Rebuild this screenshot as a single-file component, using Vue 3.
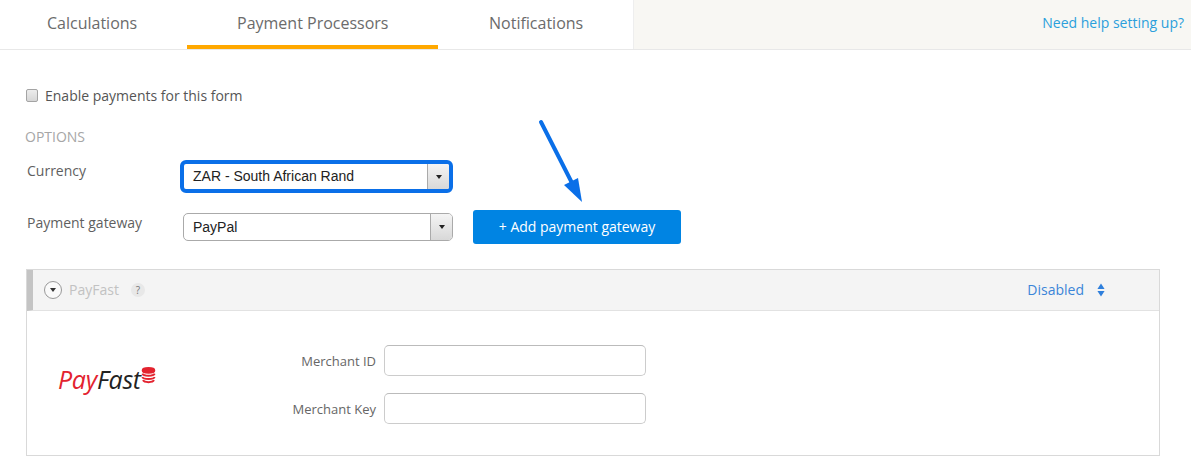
<template>
  <div class="page">
    <div class="tabs">
      <a class="tab tab-first">Calculations</a>
      <a class="tab active">Payment Processors</a>
      <a class="tab tab-last">Notifications</a>
      <div class="tabs-rest">
        <a class="help">Need help setting up?</a>
      </div>
    </div>

    <div class="content">
      <label class="enable">
        <span class="checkbox"></span>
        Enable payments for this form
      </label>

      <div class="section-title">OPTIONS</div>

      <div class="row row-currency">
        <div class="row-label">Currency</div>
        <div class="select select-focus">
          <span class="select-value">ZAR - South African Rand</span>
          <span class="select-arrow"><i></i></span>
        </div>
      </div>

      <div class="row row-gateway">
        <div class="row-label">Payment gateway</div>
        <div class="select">
          <span class="select-value">PayPal</span>
          <span class="select-arrow"><i></i></span>
        </div>
        <button class="add-btn">+ Add payment gateway</button>
      </div>

      <div class="card">
        <div class="card-header">
          <span class="toggle"><i></i></span>
          <span class="card-title">PayFast</span>
          <span class="hint">?</span>
          <span class="status">Disabled</span>
          <svg class="updown" width="8" height="14" viewBox="0 0 8 14">
            <path d="M4 0.5 L7.6 6 H0.4 Z M0.4 8 H7.6 L4 13.5 Z" fill="#2f7fdc" />
          </svg>
        </div>
        <div class="card-body">
          <div class="logo">
            <span class="logo-pay">Pay</span><span class="logo-fast">Fast</span>
            <svg class="logo-coins" width="15" height="17" viewBox="0 0 15 17">
              <g fill="none" stroke="#e3232f" stroke-width="2">
                <ellipse cx="7.5" cy="3.4" rx="5.8" ry="2.3" fill="#e3232f" />
                <path d="M1.4 6.6 C2.5 9.4 12.5 9.4 13.6 6.6" />
                <path d="M1.4 10 C2.5 12.8 12.5 12.8 13.6 10" />
                <path d="M2 13.2 C3.2 15.8 11.8 15.8 13 13.2" />
              </g>
            </svg>
          </div>
          <div class="fields">
            <div class="field">
              <label>Merchant ID</label>
              <input type="text" />
            </div>
            <div class="field">
              <label>Merchant Key</label>
              <input type="text" />
            </div>
          </div>
        </div>
      </div>
    </div>

    <!-- annotation arrow drawn over the screenshot -->
    <svg class="arrow" width="60" height="90" viewBox="0 0 60 90">
      <path d="M3 3 L34 64" stroke="#0a6fe8" stroke-width="4" stroke-linecap="round" fill="none" />
      <path d="M26 66 L40 59 L44 83 Z" fill="#0a6fe8" />
    </svg>
  </div>
</template>

<script setup>
</script>

<style>
html, body {
  margin: 0;
  background: #fff;
}
</style>

<style scoped>
.page {
  position: relative;
  width: 1191px;
  height: 460px;
  overflow: hidden;
  font-family: "Open Sans", sans-serif;
  color: #666;
}
.tabs {
  display: flex;
  height: 49px;
  border-bottom: 1px solid #e8e8e8;
}
.tab {
  box-sizing: border-box;
  height: 49px;
  padding: 14px 0 0 50px;
  font-size: 16px;
  line-height: 18px;
  color: #6b6b6b;
  white-space: nowrap;
}
.tab-first {
  width: 187px;
  padding-left: 47px;
}
.tab.active {
  width: 251px;
  border-bottom: 4px solid #ffa800;
}
.tab-last {
  width: 195px;
  padding-left: 51px;
}
.tabs-rest {
  flex: 1;
  background: #f8f7f3;
  border-left: 1px solid #eee;
  text-align: right;
  padding: 11px 7px 0 0;
}
.help {
  font-size: 14px;
  line-height: 18px;
  color: #2b9fdc;
}
.content {
  padding: 37px 31px 0 26px;
}
.enable {
  display: flex;
  align-items: center;
  height: 16px;
  font-size: 14px;
  color: #555;
}
.checkbox {
  box-sizing: border-box;
  width: 12px;
  height: 13px;
  margin-right: 7px;
  border: 1px solid #a4a4a4;
  border-radius: 2px;
  background: linear-gradient(#ececec, #d6d6d6);
}
.section-title {
  margin: 25px 0 0 -1px;
  font-size: 14px;
  line-height: 18px;
  color: #a6a6a6;
}
.row {
  display: flex;
  align-items: flex-start;
}
.row-currency {
  margin-top: 14px;
}
.row-gateway {
  margin-top: 20px;
}
.row-label {
  width: 157px;
  padding-left: 1px;
  box-sizing: border-box;
  margin-top: 1px;
  font-size: 14px;
  line-height: 18px;
  color: #5f5f5f;
}
.row-currency .row-label {
  margin-top: 2px;
}
.select {
  box-sizing: border-box;
  display: flex;
  width: 270px;
  height: 28px;
  border: 1px solid #aaa;
  border-radius: 5px;
  background: #fff;
  overflow: hidden;
  font-family: "Liberation Sans", Arial, sans-serif;
  font-size: 14px;
  color: #222;
}
.select-focus {
  width: 273px;
  height: 33px;
  margin-left: -3px;
  border: 4px solid #0a6fe8;
  border-radius: 6px;
}
.select-value {
  flex: 1;
  padding-left: 9px;
  line-height: 27px;
}
.select-focus .select-value {
  line-height: 25px;
}
.select-arrow {
  display: flex;
  align-items: center;
  justify-content: center;
  width: 21px;
  border-left: 1px solid #aaa;
  background: linear-gradient(#f4f4f4, #d8d8d8);
}
.select-arrow i {
  width: 0;
  height: 0;
  border-left: 3px solid transparent;
  border-right: 3px solid transparent;
  border-top: 4px solid #222;
}
.add-btn {
  width: 208px;
  height: 34px;
  margin: -3px 0 0 20px;
  padding: 0 0 2px;
  border: none;
  border-radius: 3px;
  background: #0084e3;
  color: #fff;
  font-family: "Open Sans", sans-serif;
  font-size: 14px;
  font-weight: 400;
}
.card {
  box-sizing: border-box;
  width: 1134px;
  height: 187px;
  margin-top: 25px;
  border: 1px solid #d9d9d9;
}
.card-header {
  box-sizing: border-box;
  display: flex;
  align-items: center;
  height: 41px;
  padding-right: 54px;
  background: #f4f4f4;
  border-left: 6px solid #c4c4c4;
  border-bottom: 1px solid #e2e2e2;
}
.toggle {
  box-sizing: border-box;
  display: flex;
  align-items: center;
  justify-content: center;
  width: 18px;
  height: 18px;
  margin-left: 11px;
  border: 1px solid #999;
  border-radius: 50%;
  background: #fafafa;
}
.toggle i {
  width: 0;
  height: 0;
  border-left: 3px solid transparent;
  border-right: 3px solid transparent;
  border-top: 4px solid #333;
}
.card-title {
  margin: 0 0 2px 7px;
  font-size: 14px;
  color: #c2c2c2;
}
.hint {
  width: 14px;
  height: 14px;
  margin-left: 12px;
  border-radius: 50%;
  background: #e8e8e8;
  font-size: 10px;
  line-height: 14px;
  text-align: center;
  color: #777;
}
.status {
  margin: 0 0 2px auto;
  font-size: 14px;
  color: #3b85d8;
}
.updown {
  margin-left: 13px;
}
.card-body {
  display: flex;
  height: 144px;
}
.logo {
  position: relative;
  width: 258px;
  box-sizing: border-box;
  padding: 53px 0 0 31px;
  font-family: "Open Sans", sans-serif;
  font-style: italic;
  font-size: 25px;
  line-height: 30px;
  letter-spacing: -0.3px;
  white-space: nowrap;
}
.logo-pay {
  color: #e3232f;
}
.logo-fast {
  color: #222;
}
.logo-coins {
  position: absolute;
  left: 114px;
  top: 56px;
}
.fields {
  padding-top: 34px;
}
.field {
  display: flex;
  align-items: center;
  height: 31px;
  margin-bottom: 17px;
}
.field label {
  width: 92px;
  margin-right: 8px;
  margin-left: -1px;
  text-align: right;
  font-size: 13px;
  color: #666;
  white-space: nowrap;
}
.field input {
  box-sizing: border-box;
  width: 262px;
  height: 31px;
  border: 1px solid #ccc;
  border-top-color: #bbb;
  border-radius: 5px;
  background: #fff;
  outline: none;
}
.arrow {
  position: absolute;
  left: 538px;
  top: 119px;
}
</style>
